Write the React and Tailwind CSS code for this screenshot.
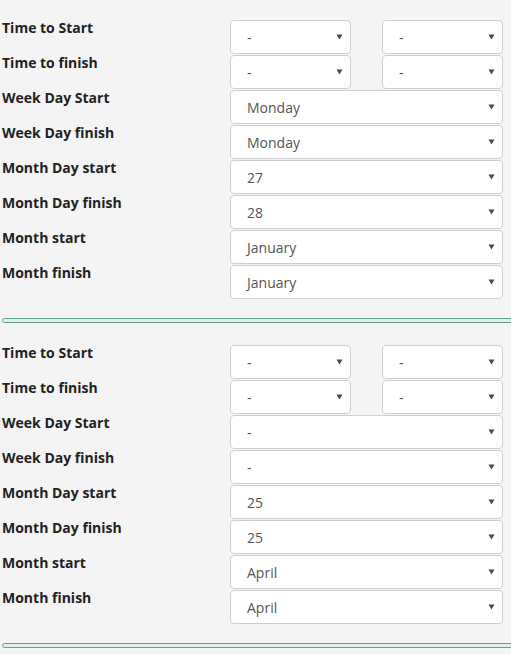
import React from 'react';

const sections = [
  {
    time: [['-', '-'], ['-', '-']],
    rows: [
      ['Week Day Start', 'Monday'],
      ['Week Day finish', 'Monday'],
      ['Month Day start', '27'],
      ['Month Day finish', '28'],
      ['Month start', 'January'],
      ['Month finish', 'January'],
    ],
  },
  {
    time: [['-', '-'], ['-', '-']],
    rows: [
      ['Week Day Start', '-'],
      ['Week Day finish', '-'],
      ['Month Day start', '25'],
      ['Month Day finish', '25'],
      ['Month start', 'April'],
      ['Month finish', 'April'],
    ],
  },
];

const Arrow = () => (
  <svg width="7" height="6" viewBox="0 0 7 6" className="shrink-0">
    <path d="M0.5 0.5 H6.5 L3.5 5.5 Z" fill="#4a4a4a" />
  </svg>
);

const Select = ({ value, wide }) => (
  <div
    className={`h-[34px] ${wide ? 'w-[273px]' : 'w-[121px]'} flex items-center justify-between pl-[16px] pr-[7px] bg-white border border-[#cfcfcf] rounded-[4px] text-[14px] text-[#555]`}
  >
    <span>{value}</span>
    <Arrow />
  </div>
);

const Row = ({ label, children }) => (
  <div className="flex h-[35px]">
    <div className="w-[228px] -mt-[2px] leading-[20px] text-[14px] font-bold text-[#222]">{label}</div>
    <div className="flex gap-[31px]">{children}</div>
  </div>
);

const Section = ({ data }) => (
  <div>
    <Row label="Time to Start">
      <Select value={data.time[0][0]} />
      <Select value={data.time[0][1]} />
    </Row>
    <Row label="Time to finish">
      <Select value={data.time[1][0]} />
      <Select value={data.time[1][1]} />
    </Row>
    {data.rows.map(([label, value]) => (
      <Row key={label} label={label}>
        <Select value={value} wide />
      </Row>
    ))}
    <div className="mt-[18px] h-[5px] w-[530px] rounded-[3px] border border-[#63a382] bg-[#e0efe7]" />
  </div>
);

export default function App() {
  return (
    <div
      className="min-h-[654px] w-full overflow-hidden bg-[#f4f4f4] pl-[2px] pt-[20px]"
      style={{ fontFamily: '"Open Sans", sans-serif' }}
    >
      <div className="flex flex-col gap-[22px]">
        {sections.map((s, i) => (
          <Section key={i} data={s} />
        ))}
      </div>
    </div>
  );
}
